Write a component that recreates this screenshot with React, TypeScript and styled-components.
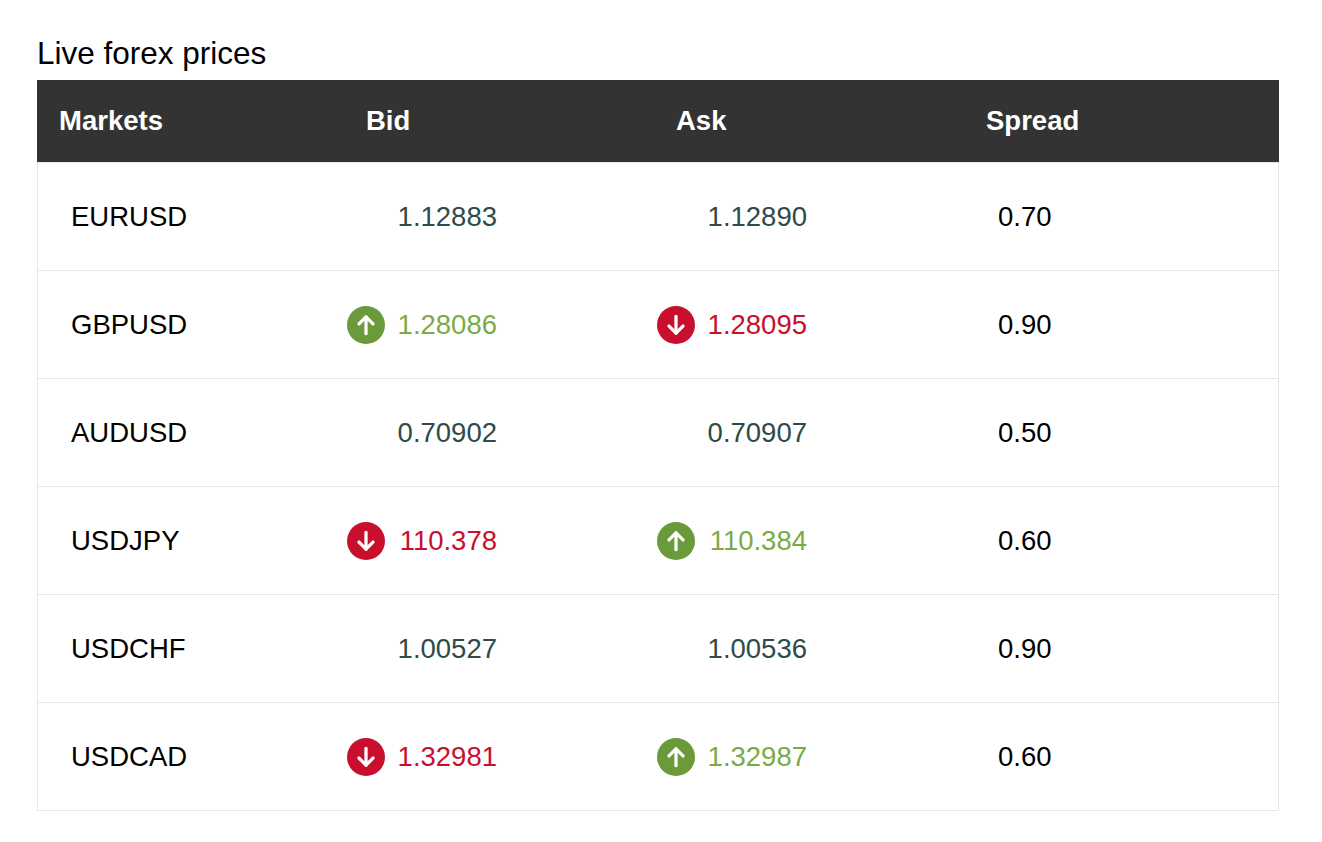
import styled, { createGlobalStyle } from "styled-components";

const Global = createGlobalStyle`
  body {
    margin: 0;
    background: #ffffff;
    font-family: "Liberation Sans", Arial, sans-serif;
  }
`;

type Dir = "up" | "down" | "none";

interface Row {
  market: string;
  bid: string;
  bidDir: Dir;
  ask: string;
  askDir: Dir;
  spread: string;
}

const rows: Row[] = [
  { market: "EURUSD", bid: "1.12883", bidDir: "none", ask: "1.12890", askDir: "none", spread: "0.70" },
  { market: "GBPUSD", bid: "1.28086", bidDir: "up", ask: "1.28095", askDir: "down", spread: "0.90" },
  { market: "AUDUSD", bid: "0.70902", bidDir: "none", ask: "0.70907", askDir: "none", spread: "0.50" },
  { market: "USDJPY", bid: "110.378", bidDir: "down", ask: "110.384", askDir: "up", spread: "0.60" },
  { market: "USDCHF", bid: "1.00527", bidDir: "none", ask: "1.00536", askDir: "none", spread: "0.90" },
  { market: "USDCAD", bid: "1.32981", bidDir: "down", ask: "1.32987", askDir: "up", spread: "0.60" },
];

const Page = styled.div`
  padding: 36px 43px 0 37px;
`;

const Title = styled.h2`
  margin: 0 0 10px 0;
  font-size: 31.5px;
  font-weight: 400;
  color: #000;
  line-height: 34px;
`;

const Table = styled.div`
  width: 1242px;
  border: 1px solid #e6e6e6;
  box-sizing: border-box;
`;

const Grid = styled.div`
  display: grid;
  grid-template-columns: 307px 310px 310px 1fr;
  align-items: center;
`;

const Head = styled(Grid)`
  background: #333333;
  height: 82px;
  margin: -1px -1px 0 -1px;
`;

const HeadCell = styled.div`
  color: #ffffff;
  font-weight: 700;
  font-size: 27.5px;
  padding-left: 22px;
`;

const BodyRow = styled(Grid)`
  height: 107px;
  border-top: 1px solid #e6e6e6;
  &:first-of-type {
    height: 108px;
    border-top: none;
  }
`;

const TextCell = styled.div`
  font-size: 27.5px;
  color: #000;
  padding-left: 33px;
`;

const PriceCell = styled.div`
  display: flex;
  align-items: center;
  justify-content: space-between;
  width: 150px;
  margin-left: 2px;
`;

const colors: Record<Dir, string> = {
  up: "#7aab45",
  down: "#c8102e",
  none: "#2e4a4a",
};

const Price = styled.span<{ $dir: Dir }>`
  font-size: 27.5px;
  color: ${(p) => colors[p.$dir]};
  margin-left: auto;
`;

const Badge = styled.span<{ $dir: Dir }>`
  width: 38px;
  height: 38px;
  border-radius: 50%;
  background: ${(p) => (p.$dir === "up" ? "#6a9a3a" : "#c8102e")};
  display: flex;
  align-items: center;
  justify-content: center;
`;

const Arrow = ({ dir }: { dir: Dir }) => (
  <svg width="26" height="26" viewBox="0 0 24 24" fill="none" stroke="#fff" strokeWidth="3" strokeLinecap="round" strokeLinejoin="round">
    {dir === "up" ? (
      <>
        <path d="M12 20V4.5" />
        <path d="M5.5 11L12 4.5l6.5 6.5" />
      </>
    ) : (
      <>
        <path d="M12 4v15.5" />
        <path d="M5.5 13L12 19.5l6.5-6.5" />
      </>
    )}
  </svg>
);

const PriceView = ({ value, dir }: { value: string; dir: Dir }) => (
  <PriceCell>
    {dir !== "none" && (
      <Badge $dir={dir}>
        <Arrow dir={dir} />
      </Badge>
    )}
    <Price $dir={dir}>{value}</Price>
  </PriceCell>
);

export default function App() {
  return (
    <Page>
      <Global />
      <Title>Live forex prices</Title>
      <Table>
        <Head>
          <HeadCell>Markets</HeadCell>
          <HeadCell>Bid</HeadCell>
          <HeadCell>Ask</HeadCell>
          <HeadCell>Spread</HeadCell>
        </Head>
        {rows.map((r) => (
          <BodyRow key={r.market}>
            <TextCell>{r.market}</TextCell>
            <PriceView value={r.bid} dir={r.bidDir} />
            <PriceView value={r.ask} dir={r.askDir} />
            <TextCell>{r.spread}</TextCell>
          </BodyRow>
        ))}
      </Table>
    </Page>
  );
}
